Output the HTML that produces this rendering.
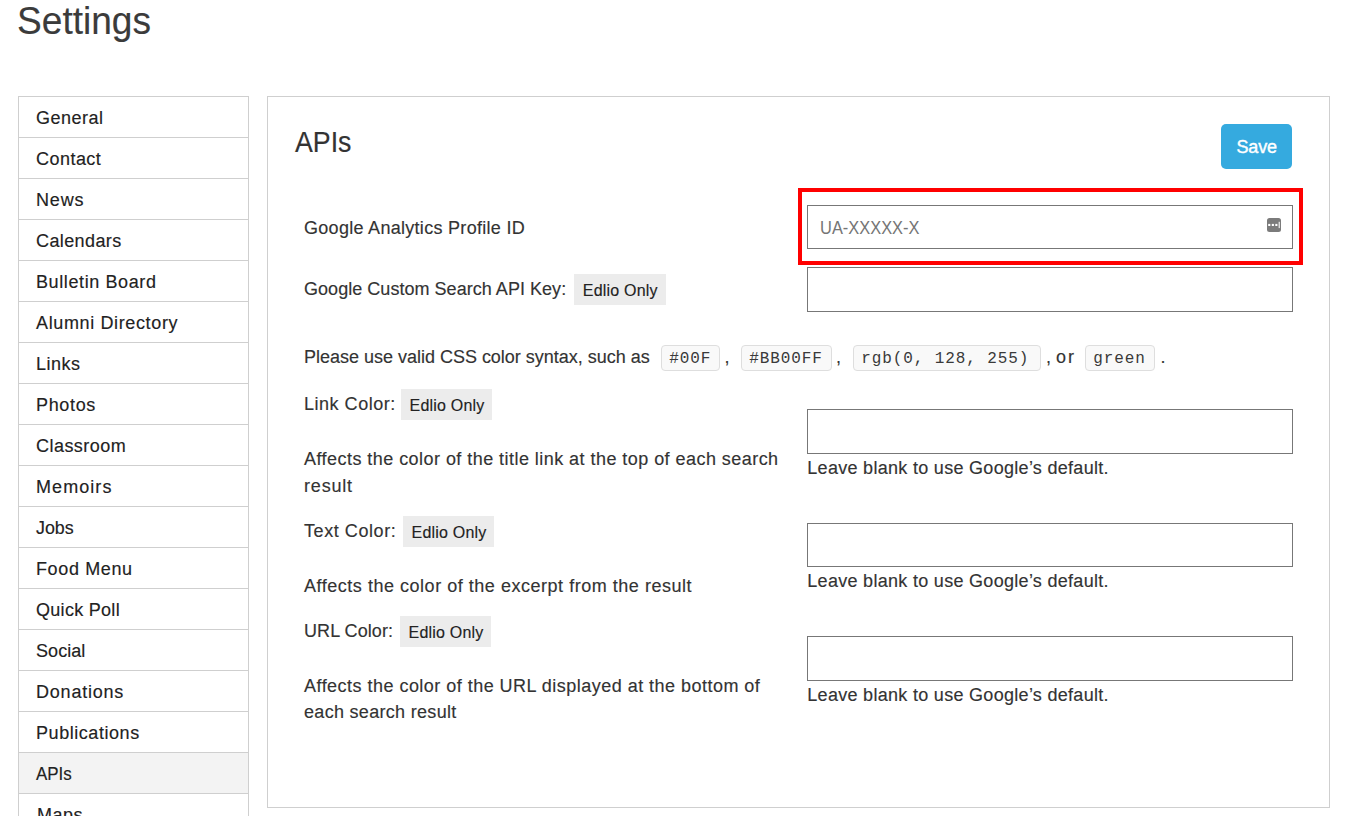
<!DOCTYPE html>
<html>
<head>
<meta charset="utf-8">
<style>
html,body{margin:0;padding:0;background:#fff;}
body{width:1348px;height:816px;overflow:hidden;position:relative;font-family:"Liberation Sans",sans-serif;color:#333;}
.t{position:absolute;white-space:nowrap;-webkit-text-stroke:0.15px currentColor;}
.b{position:absolute;box-sizing:border-box;}
#side{left:18px;top:96px;width:231px;height:760px;border:1px solid #cfcfcf;border-bottom:none;}
.row{left:19px;width:229px;height:1px;background:#cfcfcf;position:absolute;}
#main{left:267px;top:96px;width:1063px;height:712px;border:1px solid #cfcfcf;}
.inp{left:807px;width:486px;border:1px solid #777777;background:#fff;}
.badge{background:#ececec;height:31px;}
.code{top:345px;height:26px;border:1px solid #dedede;border-radius:4px;background:#f9f9f9;}
.code span{position:absolute;top:4.6px;left:7.2px;font-family:"Liberation Mono",monospace;font-size:16px;line-height:16px;letter-spacing:0.9px;color:#3a3a3a;white-space:nowrap;}
#save{left:1221px;top:124px;width:71px;height:45px;background:#35aadf;border-radius:5px;}
#red{left:798px;top:188px;width:505px;height:77px;border:4px solid #ff0000;}
.kc{left:1267px;top:218px;width:14px;height:14px;background:#777;border-radius:3px;}
</style>
</head>
<body>
<div class="b" id="side"></div>
<div class="b" style="left:19px;top:753px;width:229px;height:40px;background:#f3f3f3"></div>
<div class="row" style="top:137px"></div>
<div class="row" style="top:178px"></div>
<div class="row" style="top:219px"></div>
<div class="row" style="top:260px"></div>
<div class="row" style="top:301px"></div>
<div class="row" style="top:342px"></div>
<div class="row" style="top:383px"></div>
<div class="row" style="top:424px"></div>
<div class="row" style="top:465px"></div>
<div class="row" style="top:506px"></div>
<div class="row" style="top:547px"></div>
<div class="row" style="top:588px"></div>
<div class="row" style="top:629px"></div>
<div class="row" style="top:670px"></div>
<div class="row" style="top:711px"></div>
<div class="row" style="top:752px"></div>
<div class="row" style="top:793px"></div>
<div class="b" id="main"></div>
<div class="b" id="save"></div>
<div class="b inp" style="top:205px;height:44px"></div>
<div class="b inp" style="top:267px;height:45px"></div>
<div class="b inp" style="top:409px;height:45px"></div>
<div class="b inp" style="top:523px;height:44px"></div>
<div class="b inp" style="top:636px;height:45px"></div>
<svg style="position:absolute;left:1267px;top:218px" width="14" height="14" viewBox="0 0 14 14"><rect x="0" y="0" width="14" height="14" rx="2.5" fill="#7b7b7b"/><rect x="1.2" y="5.9" width="2.1" height="2.1" fill="#fff"/><rect x="4.8" y="5.9" width="2.1" height="2.1" fill="#fff"/><rect x="8.3" y="5.9" width="2.1" height="2.1" fill="#fff"/><rect x="11.6" y="3.8" width="1.3" height="6.3" fill="#e8e8e8"/></svg>
<div class="b" id="red"></div>
<div class="b badge" style="left:574px;top:274px;width:92px"></div>
<div class="b badge" style="left:401px;top:389px;width:91px"></div>
<div class="b badge" style="left:403px;top:516px;width:91px"></div>
<div class="b badge" style="left:400px;top:616px;width:91px"></div>
<div class="b code" style="left:661px;width:59px"><span>#00F</span></div>
<div class="b code" style="left:741px;width:91px"><span>#BB00FF</span></div>
<div class="b code" style="left:853px;width:188px"><span>rgb(0, 128, 255)</span></div>
<div class="b code" style="left:1085px;width:70px"><span>green</span></div>
<div class="t" style="left:17.00px;top:2.36px;font-size:38.2px;line-height:38.2px;transform:scaleX(0.9704);transform-origin:2.0px 0;letter-spacing:0px;color:#3b3b3b;font-weight:normal">Settings</div>
<div class="t" style="left:36.00px;top:108.56px;font-size:18px;line-height:18px;letter-spacing:0.5px;color:#222;font-weight:normal">General</div>
<div class="t" style="left:36.00px;top:149.56px;font-size:18px;line-height:18px;letter-spacing:0.467px;color:#222;font-weight:normal">Contact</div>
<div class="t" style="left:36.00px;top:190.56px;font-size:18px;line-height:18px;letter-spacing:0.833px;color:#222;font-weight:normal">News</div>
<div class="t" style="left:36.00px;top:231.56px;font-size:18px;line-height:18px;letter-spacing:0.4px;color:#222;font-weight:normal">Calendars</div>
<div class="t" style="left:36.00px;top:272.56px;font-size:18px;line-height:18px;letter-spacing:0.608px;color:#222;font-weight:normal">Bulletin Board</div>
<div class="t" style="left:36.00px;top:313.56px;font-size:18px;line-height:18px;letter-spacing:0.633px;color:#222;font-weight:normal">Alumni Directory</div>
<div class="t" style="left:36.00px;top:354.56px;font-size:18px;line-height:18px;letter-spacing:0.5px;color:#222;font-weight:normal">Links</div>
<div class="t" style="left:36.00px;top:395.56px;font-size:18px;line-height:18px;letter-spacing:0.66px;color:#222;font-weight:normal">Photos</div>
<div class="t" style="left:36.00px;top:436.56px;font-size:18px;line-height:18px;letter-spacing:0.463px;color:#222;font-weight:normal">Classroom</div>
<div class="t" style="left:36.00px;top:477.56px;font-size:18px;line-height:18px;letter-spacing:1.067px;color:#222;font-weight:normal">Memoirs</div>
<div class="t" style="left:36.00px;top:518.56px;font-size:18px;line-height:18px;transform:scaleX(0.9917);transform-origin:1.0px 0;letter-spacing:0px;color:#222;font-weight:normal">Jobs</div>
<div class="t" style="left:36.00px;top:559.56px;font-size:18px;line-height:18px;letter-spacing:0.625px;color:#222;font-weight:normal">Food Menu</div>
<div class="t" style="left:36.00px;top:600.56px;font-size:18px;line-height:18px;letter-spacing:0.289px;color:#222;font-weight:normal">Quick Poll</div>
<div class="t" style="left:36.00px;top:641.56px;font-size:18px;line-height:18px;letter-spacing:0.06px;color:#222;font-weight:normal">Social</div>
<div class="t" style="left:36.00px;top:682.56px;font-size:18px;line-height:18px;letter-spacing:0.787px;color:#222;font-weight:normal">Donations</div>
<div class="t" style="left:36.00px;top:723.56px;font-size:18px;line-height:18px;letter-spacing:0.555px;color:#222;font-weight:normal">Publications</div>
<div class="t" style="left:36.00px;top:764.56px;font-size:18px;line-height:18px;transform:scaleX(0.9405);transform-origin:0.0px 0;letter-spacing:0px;color:#222;font-weight:normal">APIs</div>
<div class="t" style="left:37.00px;top:805.56px;font-size:18px;line-height:18px;letter-spacing:0.5px;color:#222;font-weight:normal">Maps</div>
<div class="t" style="left:295.00px;top:126.73px;font-size:29.5px;line-height:29.5px;transform:scaleX(0.9066);transform-origin:0.0px 0;letter-spacing:0px;color:#333;font-weight:normal">APIs</div>
<div class="t" style="left:1236.50px;top:137.76px;font-size:18px;line-height:18px;letter-spacing:-0.167px;color:#fff;font-weight:normal;-webkit-text-stroke:0.4px #fff">Save</div>
<div class="t" style="left:304.00px;top:219.06px;font-size:18px;line-height:18px;letter-spacing:0.292px;color:#333;font-weight:normal">Google Analytics Profile ID</div>
<div class="t" style="left:819.70px;top:220.19px;font-size:17.5px;line-height:17.5px;transform:scaleX(0.9375);transform-origin:1.0px 0;letter-spacing:0px;color:#757575;font-weight:normal;-webkit-text-stroke:0">UA-XXXXX-X</div>
<div class="t" style="left:304.00px;top:280.46px;font-size:18px;line-height:18px;letter-spacing:0.036px;color:#333;font-weight:normal">Google Custom Search API Key:</div>
<div class="t" style="left:582.80px;top:282.56px;font-size:16px;line-height:16px;letter-spacing:0.211px;color:#222;font-weight:normal">Edlio Only</div>
<div class="t" style="left:304.00px;top:347.76px;font-size:18px;line-height:18px;letter-spacing:-0.01px;color:#333;font-weight:normal">Please use valid CSS color syntax, such as</div>
<div class="t" style="left:304.00px;top:395.26px;font-size:18px;line-height:18px;letter-spacing:0.52px;color:#333;font-weight:normal">Link Color:</div>
<div class="t" style="left:304.00px;top:450.26px;font-size:18px;line-height:18px;letter-spacing:0.453px;color:#333;font-weight:normal">Affects the color of the title link at the top of each search</div>
<div class="t" style="left:304.00px;top:476.56px;font-size:18px;line-height:18px;letter-spacing:0.82px;color:#333;font-weight:normal">result</div>
<div class="t" style="left:807.30px;top:458.86px;font-size:18px;line-height:18px;letter-spacing:0.297px;color:#333;font-weight:normal">Leave blank to use Google’s default.</div>
<div class="t" style="left:304.00px;top:521.76px;font-size:18px;line-height:18px;letter-spacing:0.57px;color:#333;font-weight:normal">Text Color:</div>
<div class="t" style="left:304.00px;top:576.96px;font-size:18px;line-height:18px;letter-spacing:0.526px;color:#333;font-weight:normal">Affects the color of the excerpt from the result</div>
<div class="t" style="left:807.30px;top:571.76px;font-size:18px;line-height:18px;letter-spacing:0.297px;color:#333;font-weight:normal">Leave blank to use Google’s default.</div>
<div class="t" style="left:304.00px;top:621.76px;font-size:18px;line-height:18px;letter-spacing:0.067px;color:#333;font-weight:normal">URL Color:</div>
<div class="t" style="left:304.00px;top:676.76px;font-size:18px;line-height:18px;letter-spacing:0.474px;color:#333;font-weight:normal">Affects the color of the URL displayed at the bottom of</div>
<div class="t" style="left:304.00px;top:703.26px;font-size:18px;line-height:18px;letter-spacing:0.306px;color:#333;font-weight:normal">each search result</div>
<div class="t" style="left:807.30px;top:685.56px;font-size:18px;line-height:18px;letter-spacing:0.297px;color:#333;font-weight:normal">Leave blank to use Google’s default.</div>
<div class="t" style="left:409.50px;top:397.76px;font-size:16px;line-height:16px;letter-spacing:0.211px;color:#222">Edlio Only</div>
<div class="t" style="left:411.50px;top:524.76px;font-size:16px;line-height:16px;letter-spacing:0.211px;color:#222">Edlio Only</div>
<div class="t" style="left:408.50px;top:624.76px;font-size:16px;line-height:16px;letter-spacing:0.211px;color:#222">Edlio Only</div>
<div class="t" style="left:724.5px;top:347.76px;font-size:18px;line-height:18px;letter-spacing:0px;color:#333">,</div>
<div class="t" style="left:836px;top:347.76px;font-size:18px;line-height:18px;letter-spacing:0px;color:#333">,</div>
<div class="t" style="left:1046px;top:347.76px;font-size:18px;line-height:18px;letter-spacing:0px;color:#333">,</div>
<div class="t" style="left:1056px;top:347.76px;font-size:18px;line-height:18px;letter-spacing:2px;color:#333">or</div>
<div class="t" style="left:1160.5px;top:347.76px;font-size:18px;line-height:18px;letter-spacing:0px;color:#333">.</div>
</body>
</html>
